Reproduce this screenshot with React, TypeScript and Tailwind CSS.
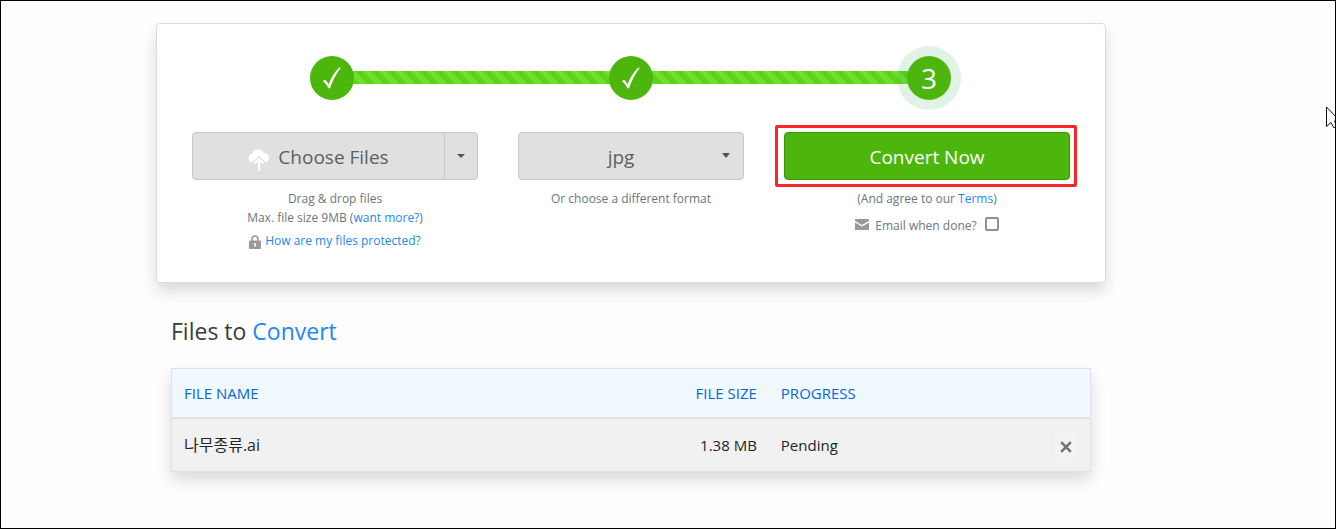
import React, { useState } from 'react';

const steps = [
  { id: 1, label: '✓', done: true },
  { id: 2, label: '✓', done: true },
  { id: 3, label: '3', done: false },
];

const files = [{ id: 1, name: '나무종류.ai', size: '1.38 MB', progress: 'Pending' }];

const Caret = ({ className = '' }: { className?: string }) => (
  <svg viewBox="0 0 8 5" preserveAspectRatio="none" className={`w-2 fill-[#555] ${className}`} aria-hidden="true">
    <path d="M0 0h8L4 5z" />
  </svg>
);

const CloudUpload = () => (
  <svg viewBox="0 0 22 22" className="mt-1 w-[22px] h-[22px] shrink-0" aria-hidden="true">
    <path
      d="M4.800 13.500A4.300 4.300 0 0 1 4 5 6.300 6.300 0 0 1 16 4.200a4.700 4.700 0 0 1 1.200 9.300z"
      fill="#fff"
    />
    <path d="M4.500 16 11 9.500l6.500 6.500M11 10v12" fill="none" stroke="#e0e0e0" strokeWidth="4" />
    <path d="M6.600 14.200 11 9.800l4.400 4.400M11 10.500V22" fill="none" stroke="#fff" strokeWidth="2" />
  </svg>
);

const CheckMark = () => (
  <svg viewBox="0 0 20 22" className="w-5 h-[22px]" aria-hidden="true">
    <path d="M.8 14l2-1.300c1.500 1 2.800 2.600 3.800 4.600C9.200 10.500 12.600 5 17 .8h1.900C14.200 6.600 10.800 13.500 8 21.200H6.300C5 18.200 3.300 15.800.8 14z" fill="#fff" />
  </svg>
);

const Stepper = () => (
  <div className="relative flex justify-between ml-[118px] mr-[119px]">
    <div className="absolute inset-x-5 top-[15px] h-[13px] bg-[#5ad510] bg-[linear-gradient(45deg,rgba(255,255,255,.15)_25%,transparent_25%,transparent_50%,rgba(255,255,255,.15)_50%,rgba(255,255,255,.15)_75%,transparent_75%)] bg-[length:16px_16px]" />
    {steps.map((step) => (
      <div
        key={step.id}
        className={`relative flex items-center justify-center size-11 rounded-full bg-[#4db60c] text-white text-[28px] ${
          step.done ? '' : 'shadow-[0_0_0_10px_rgba(40,167,69,.14)]'
        }`}
      >
        {step.done ? <CheckMark /> : step.label}
      </div>
    ))}
  </div>
);

const App = () => {
  const [format, setFormat] = useState('jpg');
  const [emailMe, setEmailMe] = useState(false);

  return (
    <div className="relative min-h-screen overflow-hidden border border-black bg-[#fefefe] pt-[22px] pl-5 pr-[94px] font-['Open_Sans','Noto_Sans_CJK_KR',sans-serif] text-[#212529]">
      <main className="max-w-[950px] mx-auto">
        <section className="rounded border border-[#dcdcdc] bg-white px-[35px] pt-8 pb-8 shadow-[0_8px_16px_rgba(0,0,0,.15)]">
          <Stepper />

          <div className="mt-8 grid grid-cols-[286fr_226fr_286fr] gap-10 text-center text-xs text-[#6c757d]">
            <div>
              <div className="flex h-12 rounded border border-[#c9c9c9] bg-[#e0e0e0] text-[19px] text-[#5f5f5f]">
                <button type="button" className="flex flex-1 items-center justify-center gap-2 pt-[3px]">
                  <CloudUpload />
                  Choose Files
                </button>
                <button
                  type="button"
                  aria-label="More sources"
                  className="flex w-[33px] items-center justify-center border-l border-[#c9c9c9]"
                >
                  <Caret className="h-1" />
                </button>
              </div>
              <p className="mt-[9px] leading-[19px]">
                Drag &amp; drop files
                <br />
                Max. file size 9MB (<a href="#pricing" className="text-[#1e87f0]">want more?</a>)
              </p>
              <p className="mt-1 flex items-center justify-center gap-1 leading-[19px]">
                <svg viewBox="0 0 12 14" className="mt-[3px] w-3 h-[14px]" aria-hidden="true">
                  <path d="M3 6V4a3 3 0 0 1 6 0v2" fill="none" stroke="#999" strokeWidth="1.600" />
                  <rect y="5.500" width="12" height="8.500" rx="1" fill="#999" />
                  <path d="M6 8a1.200 1.200 0 0 1 .6 2.200V12H5.400v-1.800A1.200 1.200 0 0 1 6 8z" fill="#fff" />
                </svg>
                <a href="#security" className="text-[#1e87f0]">How are my files protected?</a>
              </p>
            </div>

            <div>
              <div className="relative">
                <select
                  aria-label="Output format"
                  value={format}
                  onChange={(e) => setFormat(e.target.value)}
                  className="block w-full h-12 appearance-none rounded border border-[#c9c9c9] bg-[#e0e0e0] pt-[3px] pr-5 text-center text-[19px] text-[#5f5f5f] [text-align-last:center]"
                >
                  <option value="jpg">jpg</option>
                  <option value="png">png</option>
                  <option value="pdf">pdf</option>
                </select>
                <Caret className="pointer-events-none absolute right-[14px] top-[21px] h-[5px]" />
              </div>
              <p className="mt-[9px] leading-[19px]">Or choose a different format</p>
            </div>

            <div>
              <div className="relative">
                <button
                  type="button"
                  className="block w-full h-12 rounded border border-[#3d9310] bg-[#4db60c] pt-[3px] text-[19px] text-white"
                >
                  Convert Now
                </button>
                <div className="pointer-events-none absolute -inset-y-[7px] -left-[9px] -right-[7px] rounded-xs border-3 border-[#fd2528]" />
              </div>
              <p className="mt-[9px] leading-[19px]">
                (And agree to our <a href="#terms" className="text-[#1e87f0]">Terms</a>)
              </p>
              <label className="mt-2 flex items-center justify-center leading-[19px]">
                <svg viewBox="0 0 14 11" className="mr-[6px] mb-[3px] w-[14px] h-[11px]" aria-hidden="true">
                  <path d="M0 0h14v2L7 6 0 2z" fill="#999" />
                  <path d="M0 3.500l7 4 7-4V11H0z" fill="#999" />
                </svg>
                Email when done?
                <input
                  type="checkbox"
                  checked={emailMe}
                  onChange={(e) => setEmailMe(e.target.checked)}
                  className="ml-2 mb-[3px] size-[14px] appearance-none rounded-xs border-2 border-[#8f8f9d] bg-white checked:bg-[#4db60c]"
                />
              </label>
            </div>
          </div>
        </section>

        <section className="px-[15px]">
          <h2 className="mt-8 text-[23px] leading-8 text-[#3c3c3c]">
            Files to <span className="text-[#1e87f0]">Convert</span>
          </h2>
          <table className="mt-[21px] w-full table-fixed border-collapse border border-[#dee2e6] bg-[#f1f1f1] text-left text-[15px] shadow-[0_8px_16px_rgba(0,0,0,.15)]">
            <thead>
              <tr className="h-[49px] border-b-2 border-[#dee2e6] bg-[#f0f9ff] text-[#0a66d0]">
                <th className="w-1/2 px-3 font-normal">FILE NAME</th>
                <th className="w-[15%] px-3 text-right font-normal">FILE SIZE</th>
                <th className="px-3 font-normal">PROGRESS</th>
                <td className="w-14" />
              </tr>
            </thead>
            <tbody>
              {files.map((file) => (
                <tr key={file.id} className="h-[54px]">
                  <td className="px-3 text-base">{file.name}</td>
                  <td className="px-3 text-right">{file.size}</td>
                  <td className="px-3">{file.progress}</td>
                  <td className="pr-[13px]">
                    <button
                      type="button"
                      aria-label={`Remove ${file.name}`}
                      className="ml-auto flex h-7 w-[22px] items-center justify-center rounded-xs bg-[#f3f3f3]"
                    >
                      <svg viewBox="0 0 12 12" className="mt-1 size-3" aria-hidden="true">
                        <path d="M1.200 1.200l9.600 9.600M10.800 1.200l-9.600 9.600" stroke="#747474" strokeWidth="2.600" />
                      </svg>
                    </button>
                  </td>
                </tr>
              ))}
            </tbody>
          </table>
        </section>
      </main>

      {/* mouse pointer, cut off by the frame */}
      <svg viewBox="0 0 14 22" className="absolute top-[105px] -right-[5px] w-[14px] h-[22px]" aria-hidden="true">
        <path d="M.5 1v19.500l4.500-4 3 5.500 3-1.500-2.500-5.500H14z" fill="#fff" stroke="#111122" />
      </svg>
    </div>
  );
};

export default App;
